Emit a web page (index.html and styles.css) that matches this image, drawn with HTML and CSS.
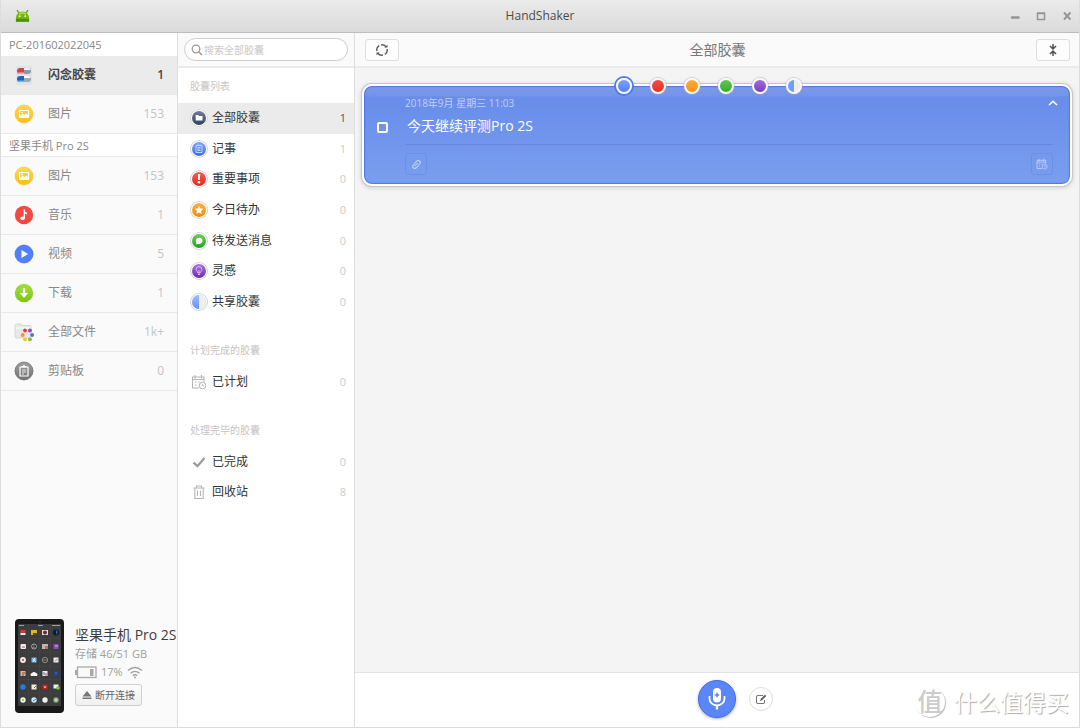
FILE: index.html
```html
<!DOCTYPE html>
<html lang="zh-CN">
<head>
<meta charset="utf-8">
<title>HandShaker</title>
<link rel="stylesheet" href="styles.css">
</head>
<body>
<svg class="defs" aria-hidden="true">
  <defs>
    <linearGradient id="g-yellow" x2="0" y2="1"><stop stop-color="#ffdc45"/><stop offset="1" stop-color="#fdbb1c"/></linearGradient>
    <linearGradient id="g-red" x2="0" y2="1"><stop stop-color="#fa5c54"/><stop offset="1" stop-color="#e6261d"/></linearGradient>
    <linearGradient id="g-blue" x2="0" y2="1"><stop stop-color="#7ca6fb"/><stop offset="1" stop-color="#3d6bf5"/></linearGradient>
    <linearGradient id="g-lime" x2="0" y2="1"><stop stop-color="#a5e03a"/><stop offset="1" stop-color="#7dc41a"/></linearGradient>
    <linearGradient id="g-grey" x2="0" y2="1"><stop stop-color="#a2a2a2"/><stop offset="1" stop-color="#707070"/></linearGradient>
    <linearGradient id="g-navy" x2="0" y2="1"><stop stop-color="#727e9e"/><stop offset="1" stop-color="#34405f"/></linearGradient>
    <linearGradient id="g-orange" x2="0" y2="1"><stop stop-color="#ffb347"/><stop offset="1" stop-color="#fb8504"/></linearGradient>
    <linearGradient id="g-green" x2="0" y2="1"><stop stop-color="#6bd05d"/><stop offset="1" stop-color="#27a01c"/></linearGradient>
    <linearGradient id="g-purple" x2="0" y2="1"><stop stop-color="#ad72e0"/><stop offset="1" stop-color="#6a2bb4"/></linearGradient>
    <linearGradient id="g-half" x2="0" y2="1"><stop stop-color="#9dbcff"/><stop offset="1" stop-color="#6690fa"/></linearGradient>
    <symbol id="picture" viewBox="0 0 20 20"><circle cx="10" cy="10" r="9" fill="url(#g-yellow)" stroke="#f9bd2a" stroke-width=".6"/><rect x="5.500" y="6.500" width="9" height="7" rx=".7" fill="none" stroke="#fff" stroke-width="1.200"/><path d="M6 12l2.500-2.200 1.800 1.300 2-1.600 2.200 2V13H6z" fill="#fff"/><circle cx="8" cy="8.600" r=".8" fill="#fff"/></symbol>
    <symbol id="calendar" viewBox="0 0 16 16"><path d="M13 7.500V3H1.500v11H8M1.500 5.500H13M4 1v3.500M10.500 1v3.500" fill="none" stroke="currentColor" stroke-width="1.100"/><path d="M4 8h1.500M7 8h1.500M4 11h1.500" stroke="currentColor" stroke-width="1.200"/><circle cx="11.500" cy="11.500" r="3.300" fill="none" stroke="currentColor"/><path d="M11.500 9.800v2h1.500" fill="none" stroke="currentColor" stroke-width=".9"/></symbol>
  </defs>
</svg>
<div class="window">
  <header class="titlebar">
    <svg class="android" viewBox="0 0 16 14" aria-hidden="true"><path d="M2 .8l2.500 3M14 .8l-2.500 3" stroke="#64a00c" stroke-width="1.300"/><path d="M1 13V9.300C1 5.300 4 2.500 8 2.500s7 2.800 7 6.800V13z" fill="#76b511"/><path d="M1 13v-3h14v3z" fill="#4f8f05"/><path d="M4.500 5.300Q8 2.500 11.500 5.300" fill="none" stroke="#b3de3c" stroke-width="1.500"/><circle cx="5" cy="7.300" r="1" fill="#e9f6bc"/><circle cx="11" cy="7.300" r="1" fill="#e9f6bc"/></svg>
    <h1 class="app-title">HandShaker</h1>
    <div class="window-controls">
      <button class="win-btn" aria-label="最小化"><svg viewBox="0 0 10 10"><path d="M2 6.500h6.500" stroke="#949494" stroke-width="2.500" stroke-linecap="round"/></svg></button>
      <button class="win-btn" aria-label="最大化"><svg viewBox="0 0 10 10"><path d="M1.500 2h7v6.500h-7zM1.500 2.500h7" fill="none" stroke="#949494" stroke-width="1.500"/></svg></button>
      <button class="win-btn" aria-label="关闭"><svg viewBox="0 0 10 10"><path d="M2 1.500l6.500 7M8.500 1.500L2 8.500" stroke="#949494" stroke-width="1.900"/></svg></button>
    </div>
  </header>
  <div class="body">
    <aside class="devices">
      <h2 class="device-title">PC-201602022045</h2>
      <nav>
        <a href="#" class="device-item current"><svg viewBox="0 0 20 20"><rect x="2" y="1" width="16" height="19" rx="2" fill="#dfe2e8"/><rect x="3" y="3" width="14" height="6" rx="3" fill="#fafafa"/><path d="M10 3H6a3 3 0 000 6h4z" fill="#d94242"/><path d="M10 3h4a3 3 0 010 6h-4z" fill="#9297a6"/><path d="M10 3h4a3 3 0 012.800 2H10z" fill="#f4f4f7"/><path d="M4 7.500h6V9H6a3 3 0 01-2-1.500z" fill="#e8b6ba"/><path d="M10 11H6a3 3 0 000 6h4z" fill="#2264bd"/><path d="M10 11h4a3 3 0 010 6h-4z" fill="#a2a7b4"/><path d="M10 11h4a3 3 0 012.800 2H10z" fill="#fff"/><path d="M4 15.500h6V17H6a3 3 0 01-2-1.500z" fill="#69b9ed"/></svg><span>闪念胶囊</span><b>1</b></a>
        <a href="#" class="device-item"><svg viewBox="0 0 20 20"><use href="#picture"/></svg><span>图片</span><b>153</b></a>
      </nav>
      <h2 class="device-title phone-title">坚果手机 Pro 2S</h2>
      <nav>
        <a href="#" class="device-item"><svg viewBox="0 0 20 20"><use href="#picture"/></svg><span>图片</span><b>153</b></a>
        <a href="#" class="device-item"><svg viewBox="0 0 20 20"><circle cx="10" cy="10" r="9.200" fill="#f54a42"/><path d="M10.300 4.500v8.500" stroke="#fff" stroke-width="1.400"/><path d="M10 4.500q.8 2.500 3 3.200v1.800q-2-.6-3-2z" fill="#fff"/><ellipse cx="8.600" cy="13.200" rx="2.300" ry="1.800" fill="#fff"/></svg><span>音乐</span><b>1</b></a>
        <a href="#" class="device-item"><svg viewBox="0 0 20 20"><circle cx="10" cy="10" r="9" fill="#5080fb" stroke="#3b68ec" stroke-width=".7"/><path d="M7.500 6l6.500 4-6.500 4z" fill="#fff"/></svg><span>视频</span><b>5</b></a>
        <a href="#" class="device-item"><svg viewBox="0 0 20 20"><circle cx="10" cy="10" r="9.200" fill="url(#g-lime)"/><path d="M8.800 5h2.400v5h3L10 14.700 5.800 10h3z" fill="#fff"/></svg><span>下载</span><b>1</b></a>
        <a href="#" class="device-item"><svg viewBox="0 0 20 20"><path d="M1 3.500A1.500 1.500 0 012.500 2H7l1.500 1.500h7A1.500 1.500 0 0117 5v9.500a1.500 1.500 0 01-1.500 1.500h-13A1.500 1.500 0 011 14.500z" fill="#e8e8e8" stroke="#cfcfcf" stroke-width=".8"/><path d="M1.500 6h15" stroke="#fff"/><circle cx="11" cy="8.500" r="1.900" fill="#e53e35"/><circle cx="16" cy="8.500" r="1.900" fill="#9149c8"/><circle cx="8.700" cy="13" r="1.900" fill="#fb8e2e"/><circle cx="18.100" cy="13" r="1.900" fill="#4b73e5"/><circle cx="11" cy="17.300" r="1.900" fill="#fcc51e"/><circle cx="16" cy="17.300" r="1.900" fill="#85bf20"/></svg><span>全部文件</span><b>1k+</b></a>
        <a href="#" class="device-item"><svg viewBox="0 0 20 20"><circle cx="10" cy="10" r="9" fill="url(#g-grey)" stroke="#6e6e6e" stroke-width=".8"/><path d="M6 6h8v9H6z" fill="none" stroke="#fff" stroke-width="1.200"/><path d="M7.500 6.500V5H9a1 1 0 012 0h1.500v1.500z" fill="#fff"/><path d="M8 9h4M8 11h4M8 13h2" stroke="#eee" stroke-width=".9"/></svg><span>剪贴板</span><b>0</b></a>
      </nav>
      <section class="phone">
        <svg class="phone-art" viewBox="0 0 49 94" role="img" aria-label="手机"><rect width="49" height="94" rx="4" fill="#191919"/><rect x="3" y="5" width="43" height="82" fill="#3c3c3c"/><path d="M13.500 5v82M24.500 5v82M35.500 5v82M3 19.500h43M3 33h43M3 47h43M3 60.500h43M3 74h43" stroke="#484848" stroke-width=".5"/><path d="M4 6.500h5M23 6.500h5M37 6.500h8" stroke="#bbb" stroke-width=".8"/><circle cx="25" cy="3" r=".8" fill="#32346a"/>
          <g><rect x="5.500" y="11" width="5" height="5" fill="#d8363a"/><path d="M5.500 14h5v2h-5z" fill="#eee"/><rect x="16" y="11" width="6" height="5" fill="#e5b421"/><path d="M18 14h4v2h-4z" fill="#69461e"/><rect x="27" y="11" width="6" height="5" fill="#ddd"/><circle cx="30" cy="13.500" r="2" fill="#7c2522"/><circle cx="41" cy="13.500" r="3" fill="#101a2d"/><path d="M41 11l2 2-2 3z" fill="#2a67b2"/></g>
          <g><rect x="5.500" y="25" width="5.500" height="5" rx="1" fill="#eee"/><path d="M7 28h3" stroke="#d34444"/><circle cx="19" cy="27.500" r="2.500" fill="#333" stroke="#bbb" stroke-width=".8"/><path d="M19 25v3l2 1M19 28l-2 1" stroke="#bbb" stroke-width=".6"/><rect x="27" y="25" width="6" height="5" fill="#b9b9b9"/><path d="M30 27h3v3h-3z" fill="#e46833"/><rect x="38.500" y="25" width="5" height="5" fill="#8f46be"/><path d="M40 27h3" stroke="#d8b6ee"/></g>
          <g><circle cx="8" cy="41" r="2.900" fill="#eee"/><circle cx="8" cy="41" r="1" fill="#cb3332"/><rect x="16.500" y="38.500" width="5" height="5" fill="#70b7ee"/><path d="M18 40l3 3M20 39l-2 4" stroke="#eaf7ff" stroke-width=".8"/><circle cx="30" cy="41" r="2.700" fill="none" stroke="#aaa" stroke-width=".7"/><path d="M28 41h4" stroke="#aaa" stroke-width=".6"/><rect x="38.500" y="38.500" width="5" height="5" fill="#e9e9e9"/><path d="M40 42l3-2" stroke="#777" stroke-width=".7"/></g>
          <g><rect x="5.500" y="52" width="5" height="5" fill="#d9bba4"/><path d="M7 54h3M7 56h2" stroke="#914131"/><path d="M16 57a2 2 0 011-3 2.500 2.500 0 014 0 2 2 0 011 3z" fill="#f6f6f6"/><rect x="27.500" y="52" width="5" height="5" fill="#eee"/><path d="M29 53v3" stroke="#3e70c8"/><path d="M31 54v3" stroke="#d64c48"/><rect x="38.500" y="52" width="5" height="5" fill="#23428f"/><path d="M40 54h2" stroke="#4f75c8"/></g>
          <g><circle cx="8" cy="68" r="2.700" fill="#207fe7"/><rect x="16.500" y="65.500" width="5" height="5" fill="#f0ead9"/><path d="M19 69l2-2" stroke="#b35132"/><rect x="27.500" y="65.500" width="5" height="5" fill="#c51e25"/><path d="M29 67l1 2 1-2" stroke="#fff" stroke-width=".6" fill="none"/><rect x="38.500" y="65.500" width="5" height="4" fill="#eee"/><circle cx="43" cy="69" r="1.800" fill="#7ac534"/></g>
          <g><circle cx="8" cy="81" r="2.700" fill="#eef5e9"/><circle cx="8" cy="81" r="1" fill="#80b95a"/><circle cx="19" cy="81" r="2.700" fill="#cbeaff"/><path d="M18 82l3-2" stroke="#2b83d5"/><circle cx="30" cy="81" r="2.700" fill="#f0f1e6"/><circle cx="41" cy="81" r="2.700" fill="#8ab47e"/><circle cx="41" cy="81" r="1" fill="#dfeeda"/></g>
        </svg>
        <div class="phone-info">
          <h3 class="phone-name">坚果手机 Pro 2S</h3>
          <p class="storage">存储 46/51 GB</p>
          <p class="battery"><svg class="battery-icon" viewBox="0 0 22 13" aria-hidden="true"><rect x="2.500" y="1" width="18.500" height="10.500" fill="none" stroke="#a9a9a9" stroke-width="1.300"/><path d="M0 4h2v5H0zM15 3h3.500v7H15z" fill="#a9a9a9"/></svg>17%<svg class="wifi" viewBox="0 0 16 13" aria-hidden="true"><path d="M1 4.500q7-6 14 0M3.500 7.200q4.500-3.700 9 0M5.800 9.600q2.200-1.800 4.400 0" fill="none" stroke="#a2a2a2" stroke-width="1.400"/><circle cx="8" cy="11.500" r="1" fill="#a2a2a2"/></svg></p>
          <button class="disconnect"><svg viewBox="0 0 10 10" aria-hidden="true"><path d="M5 1l4.500 5.500h-9zM.5 7.500h9V9h-9z" fill="#777"/></svg>断开连接</button>
        </div>
      </section>
    </aside>

    <section class="lists">
      <div class="search-bar">
        <label class="search"><svg viewBox="0 0 12 12" aria-hidden="true"><circle cx="5" cy="5" r="3.800" fill="none" stroke="#9c9c9c" stroke-width="1.300"/><path d="M8 8l3 3" stroke="#9c9c9c" stroke-width="1.600"/></svg><input type="search" placeholder="搜索全部胶囊" aria-label="搜索全部胶囊"></label>
      </div>
      <h2 class="list-title">胶囊列表</h2>
      <nav class="list list-main">
        <a href="#" class="list-item current"><svg class="ring" viewBox="0 0 18 18"><circle cx="9" cy="9" r="7" fill="url(#g-navy)"/><path d="M5.700 6h2.500l.8 1h3.500v4.500H5.700z" fill="#fff"/></svg><span>全部胶囊</span><b>1</b></a>
        <a href="#" class="list-item"><svg class="ring" viewBox="0 0 18 18"><circle cx="9" cy="9" r="7" fill="url(#g-blue)"/><path d="M6 5.500h6v7H6zM7.500 7.500h3M7.500 9h3M7.500 10.500h3M8 4.500v1M10 4.500v1" fill="none" stroke="#dce7ff" stroke-width=".8"/></svg><span>记事</span><b>1</b></a>
        <a href="#" class="list-item"><svg class="ring" viewBox="0 0 18 18"><circle cx="9" cy="9" r="7" fill="url(#g-red)"/><path d="M7.800 4h2.400l-.4 6H8.200z" fill="#fff"/><circle cx="9" cy="12.300" r="1.300" fill="#fff"/></svg><span>重要事项</span><b>0</b></a>
        <a href="#" class="list-item"><svg class="ring" viewBox="0 0 18 18"><circle cx="9" cy="9" r="7" fill="url(#g-orange)"/><path d="M9 4.700l1.300 2.700 3 .4-2.200 2.100.5 3L9 11.500l-2.600 1.400.5-3-2.200-2.100 3-.4z" fill="#fff"/></svg><span>今日待办</span><b>0</b></a>
        <a href="#" class="list-item"><svg class="ring" viewBox="0 0 18 18"><circle cx="9" cy="9" r="7" fill="url(#g-green)"/><ellipse cx="9.200" cy="8.800" rx="3.300" ry="3.100" fill="#fff"/><path d="M6.500 9.500l-.3 2.900L9 11.500z" fill="#fff"/></svg><span>待发送消息</span><b>0</b></a>
        <a href="#" class="list-item"><svg class="ring" viewBox="0 0 18 18"><circle cx="9" cy="9" r="7" fill="url(#g-purple)"/><path d="M7.800 11c0-1.500-1.600-1.600-1.600-3.600a2.800 2.800 0 015.600 0c0 2-1.600 2.100-1.600 3.600zM7.900 12.500h2.200M9 8v3" fill="none" stroke="#e4ccfa" stroke-width=".9"/></svg><span>灵感</span><b>0</b></a>
        <a href="#" class="list-item"><svg class="ring" viewBox="0 0 18 18"><circle cx="9" cy="9" r="6.800" fill="#f1f1f1" stroke="#d5d5d5" stroke-width=".6"/><path d="M9 2a7 7 0 000 14z" fill="url(#g-half)"/></svg><span>共享胶囊</span><b>0</b></a>
      </nav>
      <h2 class="list-title">计划完成的胶囊</h2>
      <nav class="list">
        <a href="#" class="list-item"><svg class="plain" viewBox="0 0 16 16"><use href="#calendar"/></svg><span>已计划</span><b>0</b></a>
      </nav>
      <h2 class="list-title">处理完毕的胶囊</h2>
      <nav class="list">
        <a href="#" class="list-item"><svg class="plain" viewBox="0 0 16 16"><path d="M2.500 8.500l4 3.700L13.500 4" fill="none" stroke="#9b9b9b" stroke-width="2.300"/></svg><span>已完成</span><b>0</b></a>
        <a href="#" class="list-item"><svg class="plain" viewBox="0 0 16 16"><path d="M2.500 4h11M5.500 4V2h5v2M3.800 4v10.500h8.400V4M6.500 6.500v5.500M9.500 6.500v5.500" fill="none" stroke="#b5b5b5" stroke-width="1.100"/></svg><span>回收站</span><b>8</b></a>
      </nav>
    </section>

    <main class="content">
      <div class="toolbar">
        <button class="tool-btn" aria-label="刷新"><svg viewBox="0 0 14 14"><path d="M1.900 8A5.200 5.200 0 014.200 2.600M6 1.900A5.200 5.200 0 0111.300 4M12.100 6A5.200 5.200 0 019.800 11.400M8 12.100A5.200 5.200 0 012.700 10" fill="none" stroke="#5e5e5e" stroke-width="1.500"/><path d="M9.300 4.600h3.200V1.800zM4.700 9.400H1.500v2.800z" fill="#5e5e5e"/></svg></button>
        <h2 class="content-title">全部胶囊</h2>
        <button class="tool-btn" aria-label="全部收起"><svg viewBox="0 0 14 14"><path d="M7 1v4.500M7 13V8.500M4 3l3 3 3-3M4 11l3-3 3 3" fill="none" stroke="#505050" stroke-width="1.500"/></svg></button>
      </div>
      <div class="stream">
        <article class="card">
          <fieldset class="colors">
            <input type="radio" name="color" class="dot blue" aria-label="记事" checked>
            <input type="radio" name="color" class="dot red" aria-label="重要事项">
            <input type="radio" name="color" class="dot orange" aria-label="今日待办">
            <input type="radio" name="color" class="dot green" aria-label="待发送消息">
            <input type="radio" name="color" class="dot purple" aria-label="灵感">
            <input type="radio" name="color" class="dot shared" aria-label="共享胶囊">
          </fieldset>
          <input type="checkbox" class="done" aria-label="完成">
          <div class="card-body">
            <div class="card-head">
              <time class="card-time">2018年9月 星期三 11:03</time>
              <button class="fold" aria-label="收起"><svg viewBox="0 0 10 6"><path d="M1 5l4-3.700L9 5" fill="none" stroke="#fff" stroke-width="1.500"/></svg></button>
            </div>
            <p class="card-text">今天继续评测Pro 2S</p>
            <div class="card-tools">
              <button class="card-btn" aria-label="附件"><svg viewBox="0 0 12 12"><path d="M4.800 8L7.500 5M3 7.500L6.300 3.500Q8 1.800 9.500 3t.2 3L6.500 9.500Q5 11 3.500 10T3 7.500" fill="none" stroke="#c5d3fa" stroke-width="1.100"/></svg></button>
              <button class="card-btn" aria-label="设置提醒"><svg viewBox="0 0 16 16"><use href="#calendar"/></svg></button>
            </div>
          </div>
        </article>
      </div>
      <footer class="composer">
        <button class="mic" aria-label="录音"><svg viewBox="0 0 20 24"><rect x="6" y="1" width="8" height="14.500" rx="4" fill="#fff"/><path d="M2.500 9v2.500a7.500 7 0 0015 0V9" fill="none" stroke="#fff" stroke-width="1.800"/><path d="M10 18v4.500" stroke="#fff" stroke-width="2.200"/><path d="M7.800 8h4.400M10 5.800v4.400" stroke="#5b86f7" stroke-width="1.500"/></svg></button>
        <button class="write" aria-label="新建"><svg viewBox="0 0 12 12"><path d="M8 2.500H3Q1.500 2.500 1.500 4v5q0 1.500 1.500 1.500h5q1.500 0 1.500-1.500V7" fill="none" stroke="#777" stroke-width="1.100"/><path d="M5 8l.7-2L10 1.700l1.300 1.200L7 7.300z" fill="#555"/></svg></button>
        <div class="brand"><span class="brand-mark">值</span><span class="brand-name">什么值得买</span></div>
      </footer>
    </main>
  </div>
</div>
</body>
</html>
```
FILE: styles.css
```css
* { box-sizing: border-box; }
body {
  margin: 0;
  font: 12px/18px "Open Sans", "Noto Sans CJK SC", sans-serif;
  color: #444;
}
h1, h2, h3, p { margin: 0; font-weight: 400; }
a { color: inherit; text-decoration: none; }
button { padding: 0; border: 0; background: none; font: inherit; color: inherit; }
svg { display: block; flex: none; }
.defs { position: absolute; width: 0; height: 0; }

.window {
  display: flex;
  flex-direction: column;
  min-height: 100vh;
  border: 1px solid #dcdcdc;
  border-top: 0;
  background: #fff;
}
.titlebar {
  display: grid;
  grid-template-columns: 1fr auto 1fr;
  align-items: center;
  height: 33px;
  padding: 0 7px 0 14px;
  border-bottom: 1px solid #bdbdbd;
  background: linear-gradient(#ebebeb, #dadada);
}
.android { width: 15px; height: 14px; }
.app-title { padding-right: 7px; font-size: 12px; line-height: 20px; color: #4c4c4c; }
.window-controls { display: flex; justify-content: flex-end; gap: 16px; }
.win-btn svg { width: 10px; height: 10px; }
.body { display: flex; flex: 1; }

.devices {
  display: flex;
  flex-direction: column;
  flex: none;
  width: 177px;
  border-right: 1px solid #dedede;
  background: #fafafa;
}
.device-title {
  height: 23px;
  padding-left: 8px;
  font-size: 11px;
  line-height: 23px;
  background: #fff;
  color: #888;
}
.phone-title { border-bottom: 1px solid #e8e8e8; }
.device-item {
  display: flex;
  align-items: center;
  height: 39px;
  padding: 0 13px;
  border-bottom: 1px solid #e8e8e8;
  color: #888;
}
.device-item svg { width: 20px; height: 20px; }
.device-item span { flex: 1; margin-left: 14px; }
.device-item b { font-weight: 400; color: #c4c4c4; }
.device-item.current { background: #ebebeb; }
.device-item.current, .device-item.current b { font-weight: 600; color: #444; }

.phone {
  display: flex;
  gap: 11px;
  margin-top: auto;
  padding: 0 0 14px 14px;
  white-space: nowrap;
}
.phone-art { width: 49px; height: 94px; }
.phone-info { padding-top: 6px; }
.phone-name { font-size: 14px; line-height: 20px; color: #3d3d3d; }
.storage, .battery { font-size: 11px; line-height: 18px; color: #a0a0a0; }
.battery { display: flex; align-items: center; gap: 4px; }
.battery-icon { width: 22px; height: 13px; }
.wifi { width: 16px; height: 13px; }
.disconnect {
  display: flex;
  align-items: center;
  gap: 3px;
  height: 22px;
  margin-top: 3px;
  padding: 0 6px;
  border: 1px solid #cfcfcf;
  border-radius: 3px;
  background: linear-gradient(#fcfcfc, #f0f0f0);
  font-size: 10px;
  color: #666;
}
.disconnect svg { width: 10px; height: 10px; }

.lists {
  flex: none;
  width: 177px;
  border-right: 1px solid #dedede;
}
.search-bar {
  height: 35px;
  padding: 5px 6px;
  border-bottom: 2px solid #ebebeb;
  background: #fafafa;
}
.search {
  display: flex;
  align-items: center;
  gap: 1px;
  height: 23px;
  padding: 0 6px;
  border: 1px solid #cdcdcd;
  border-radius: 12px;
  background: #fff;
}
.search svg { width: 12px; height: 12px; }
.search input {
  flex: 1;
  min-width: 0;
  height: 20px;
  padding: 0;
  border: 0;
  outline: 0;
  background: none;
  font: inherit;
  font-size: 10px;
}
.search input::placeholder { color: #c9c9c9; }
.list-title {
  padding: 9px 12px 8px;
  font-size: 10px;
  color: #c6c6c6;
}
.list { display: grid; grid-auto-rows: 30px; }
.list-main { grid-template-rows: repeat(7, 1fr); height: 214px; margin-bottom: 15px; }
.list + .list-title { margin-top: 15px; }
.list-item {
  display: flex;
  align-items: center;
  padding: 0 8px 0 12px;
  color: #333;
}
.list-item.current { background: #ebebeb; }
.list-item span { flex: 1; margin-left: 4px; }
.list-item b { font-size: 11px; font-weight: 400; color: #cbcbcb; }
.list-item.current b { color: #555; }
.ring {
  width: 18px;
  height: 18px;
  border-radius: 50%;
  background: #fff;
  box-shadow: inset 0 0 0 1px #d5d5d5;
}
.plain { width: 16px; height: 16px; margin: 0 1px; color: #b5b5b5; }

.content { display: flex; flex-direction: column; flex: 1; background: #f4f4f4; }
.toolbar {
  display: flex;
  align-items: center;
  justify-content: space-between;
  height: 35px;
  padding: 0 9px 0 10px;
  border-bottom: 2px solid #ebebeb;
  background: #fafafa;
}
.tool-btn {
  display: grid;
  place-items: center;
  width: 34px;
  height: 22px;
  border: 1px solid #dedede;
  border-radius: 3px;
  background: #fdfdfd;
}
.tool-btn svg { width: 14px; height: 14px; }
.content-title { font-size: 14px; color: #777; }
.stream { flex: 1; padding: 16px 7px; }

.card {
  position: relative;
  display: flex;
  align-items: center;
  min-height: 102px;
  padding: 0 17px 2px 13px;
  border: 2px solid #fff;
  border-radius: 10px;
  background: linear-gradient(#7b9aea, #7594e9 10px, #688dea 11px, #7a9eef);
  box-shadow: 0 0 0 1px #c6c6c6, 0 1px 4px 1px #d0d0d0, inset 0 0 1px 1px #4d76e3;
}
.colors {
  position: absolute;
  inset: -10px 16px auto 0;
  display: grid;
  grid-template-columns: repeat(6, 34px);
  place-items: center;
  justify-content: center;
  height: 20px;
  min-width: 0;
  margin: 0;
  padding: 0;
  border: 0;
}
.dot {
  appearance: none;
  width: 16px;
  height: 16px;
  margin: 0;
  border: 2px solid #f7f7f7;
  border-radius: 50%;
  background-origin: border-box;
  box-shadow: 0 0 1px 1px #aaaaaa80;
}
.blue { background-image: linear-gradient(#82a9fb, #4b79f5); }
.red { background-image: linear-gradient(#f5564b, #e4271c); }
.orange { background-image: linear-gradient(#ffb13e, #fb8b13); }
.green { background-image: linear-gradient(#66cc59, #2ea924); }
.purple { background-image: linear-gradient(#a974de, #7436bd); }
.shared { background-image: linear-gradient(90deg, #759cf8 50%, #eee 50%); }
.dot:checked { box-shadow: 0 0 0 2px #4c7cf5; }
.done {
  appearance: none;
  flex: none;
  width: 11px;
  height: 11px;
  margin: 0 17px 13px 0;
  border: 2px solid #fff;
  border-radius: 2px;
}
.card-body { flex: 1; }
.card-head {
  display: flex;
  align-items: center;
  justify-content: space-between;
  height: 18px;
  margin-right: -5px;
}
.card-time { font-size: 10px; color: #c0cff8; }
.fold svg { width: 10px; height: 6px; }
.card-text {
  height: 33px;
  padding: 3px 2px 0;
  border-bottom: 1px solid #678ae0;
  font-size: 14px;
  line-height: 22px;
  color: #fff;
}
.card-tools { display: flex; justify-content: space-between; padding-top: 8px; }
.card-btn {
  display: grid;
  place-items: center;
  width: 22px;
  height: 22px;
  border: 1px solid #6c90e4;
  border-radius: 3px;
  color: #c5d3fa;
}
.card-btn svg { width: 12px; height: 12px; }

.composer {
  display: grid;
  grid-template-columns: 1fr auto 1fr;
  align-items: center;
  min-height: 55px;
  padding-bottom: 3px;
  border-top: 1px solid #e2e2e2;
  background: #fff;
}
.mic {
  grid-column: 2;
  display: grid;
  place-items: center;
  width: 38px;
  height: 38px;
  border: 1px solid #3f6df0;
  border-radius: 50%;
  background: #5b86f7;
  box-shadow: 0 1px 3px #aaa;
}
.mic svg { width: 20px; height: 24px; }
.write {
  grid-area: 1 / 3;
  display: grid;
  place-items: center;
  width: 24px;
  height: 24px;
  margin-left: 13px;
  border: 1px solid #dedede;
  border-radius: 50%;
}
.write svg { width: 12px; height: 12px; }
.brand {
  grid-area: 1 / 3;
  justify-self: end;
  display: flex;
  align-items: center;
  gap: 9px;
  padding: 6px 10px 0 0;
  color: #fff;
  text-shadow: 1px 1px 1px #aaa;
}
.brand-mark {
  width: 30px;
  height: 30px;
  border-radius: 50%;
  box-shadow: 1px 1px 1px #bbb;
  font-size: 25px;
  font-weight: 500;
  line-height: 28px;
  text-align: center;
  color: #ccc;
  text-shadow: none;
}
.brand-name { font-size: 23px; line-height: 30px; }
```
